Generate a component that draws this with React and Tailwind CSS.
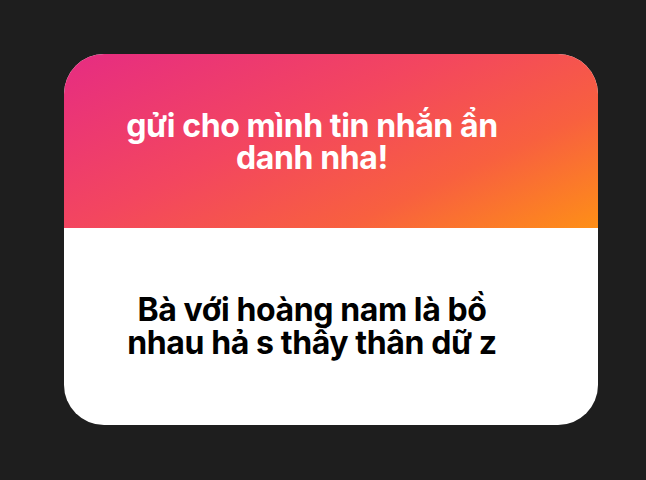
export default function App() {
  return (
    <div className="w-[646px] h-[480px] bg-[#1e1e1e] pt-[54px] pl-[64px]" style={{ fontFamily: "Inter, 'Noto Sans', sans-serif" }}>
      <div className="w-[534px] h-[371px] rounded-[40px] overflow-hidden flex flex-col bg-white">
        <div className="h-[174px] flex items-center justify-center pr-[38px] bg-[linear-gradient(155deg,#e62c82_0%,#f3465f_42%,#f8603f_72%,#fe8f17_100%)]">
          <div className="text-white font-[750] text-[32px] leading-[32px] text-center tracking-[-0.4px] pt-[2px]">
            gửi cho mình tin nhắn ẩn<br />danh nha!
          </div>
        </div>
        <div className="flex-1 flex items-center justify-center pr-[38px]">
          <div className="text-black font-[650] text-[32px] leading-[33px] text-center tracking-[-0.4px] pb-[1px]">
            Bà với hoàng nam là bồ<br />nhau hả s thấy thân dữ z
          </div>
        </div>
      </div>
    </div>
  );
}
